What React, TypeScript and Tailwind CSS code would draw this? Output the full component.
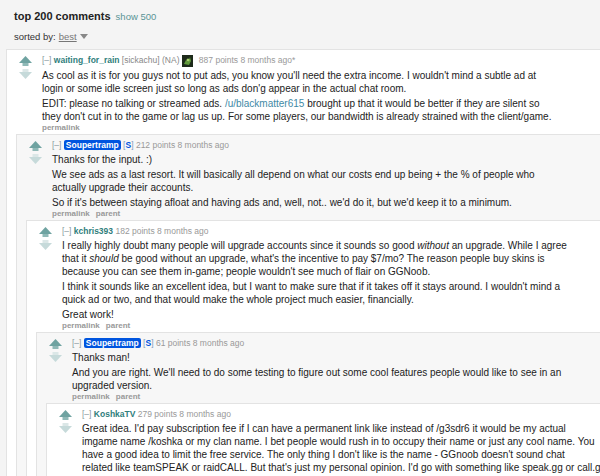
import React from 'react';

type Line = React.ReactNode;

interface CommentData {
  author: string;
  submitter?: boolean;
  flair?: boolean;
  points: number;
  edited?: boolean;
  parent?: boolean;
  paras: Line[][];
  child?: CommentData;
}

const thread: CommentData = {
  author: 'waiting_for_rain',
  flair: true,
  points: 887,
  edited: true,
  paras: [
    [
      "As cool as it is for you guys not to put ads, you know you'll need the extra income. I wouldn't mind a subtle ad at",
      "login or some idle screen just so long as ads don'g appear in the actual chat room.",
    ],
    [
      <>
        EDIT: please no talking or streamed ads.{' '}
        <a className="text-[#3f8aa6]">/u/blackmatter615</a> brought up that it would be better if they are silent so
      </>,
      "they don't cut in to the game or lag us up. For some players, our bandwidth is already strained with the client/game.",
    ],
  ],
  child: {
    author: 'Soupertramp',
    submitter: true,
    points: 212,
    parent: true,
    paras: [
      ['Thanks for the input. :)'],
      [
        'We see ads as a last resort. It will basically all depend on what our costs end up being + the % of people who',
        'actually upgrade their accounts.',
      ],
      ["So if it's between staying afloat and having ads and, well, not.. we'd do it, but we'd keep it to a minimum."],
    ],
    child: {
      author: 'kchris393',
      points: 182,
      parent: true,
      paras: [
        [
          <>
            I really highly doubt many people will upgrade accounts since it sounds so good <em>without</em> an upgrade. While I agree
          </>,
          <>
            that it <em>should</em> be good without an upgrade, what's the incentive to pay $7/mo? The reason people buy skins is
          </>,
          "because you can see them in-game; people wouldn't see much of flair on GGNoob.",
        ],
        [
          "I think it sounds like an excellent idea, but I want to make sure that if it takes off it stays around. I wouldn't mind a",
          'quick ad or two, and that would make the whole project much easier, financially.',
        ],
        ['Great work!'],
      ],
      child: {
        author: 'Soupertramp',
        submitter: true,
        points: 61,
        parent: true,
        paras: [
          ['Thanks man!'],
          [
            "And you are right. We'll need to do some testing to figure out some cool features people would like to see in an",
            'upgraded version.',
          ],
        ],
        child: {
          author: 'KoshkaTV',
          points: 279,
          parent: true,
          paras: [
            [
              "Great idea. I'd pay subscription fee if I can have a permanent link like instead of /g3sdr6 it would be my actual",
              'imgame name /koshka or my clan name. I bet people would rush in to occupy their name or just any cool name. You',
              "have a good idea to limit the free service. The only thing I don't like is the name - GGnoob doesn't sound chat",
              "related like teamSPEAK or raidCALL. But that's just my personal opinion. I'd go with something like speak.gg or call.gg",
              'if you like the gg part.',
            ],
          ],
        },
      },
    },
  },
};

const UpArrow = () => (
  <svg width="13" height="11" viewBox="0 0 13 11">
    <path d="M6.5 0 L13 7 L0 7 Z" fill="#6fa3a1" />
    <rect x="3.5" y="7" width="6" height="3" fill="#8fb9b7" />
  </svg>
);

const DownArrow = () => (
  <svg width="13" height="11" viewBox="0 0 13 11">
    <rect x="3.5" y="0" width="6" height="3" fill="#dbe7e7" />
    <path d="M0 3 L13 3 L6.5 10 Z" fill="#c6dada" />
  </svg>
);

const FlairIcon = () => (
  <svg width="11" height="12" viewBox="0 0 11 12" className="inline-block align-middle mx-[3px]">
    <rect width="11" height="12" fill="#1d2a1a" />
    <path d="M2 9 L4 5 L6 7 L8 2 L9 6 L7 10 Z" fill="#5f9a3a" />
    <circle cx="6" cy="5" r="1.5" fill="#a6d26a" />
  </svg>
);

const Comment = ({ data, level }: { data: CommentData; level: number }) => {
  const bg = level % 2 === 0 ? 'bg-white' : 'bg-[#f7f7f7]';
  return (
    <div className={`${bg} border-t border-l border-[#e3e3e3] ${level > 0 ? 'ml-[9px] mt-[2px]' : ''}`}>
      <div className="flex pt-[4px]">
        {/* vote arrows */}
        <div className="w-[35px] shrink-0 flex flex-col items-center pl-[1px] pt-[2px] gap-[2px]">
          <UpArrow />
          <DownArrow />
        </div>
        <div className="flex-1">
          <div className="text-[8.5px] leading-[12px] text-[#888] whitespace-nowrap">
            <span className="text-[#8a9aa0]">[–]</span>{' '}
            {data.submitter ? (
              <>
                <span className="bg-[#0055df] text-white font-bold rounded-[2px] px-[2px]">{data.author}</span>{' '}
                <span className="text-[#7a9cc0]">
                  [<span className="text-[#0055df] font-bold">S</span>]
                </span>
              </>
            ) : (
              <span className="text-[#2f7e7c] font-bold">{data.author}</span>
            )}
            {data.flair && (
              <>
                {' '}
                <span>[sickachu] (NA)</span>
                <FlairIcon />
              </>
            )}{' '}
            <span className="text-[#999]">
              {data.points} points 8 months ago{data.edited ? '*' : ''}
            </span>
          </div>
          <div className="mt-[2px] flex flex-col gap-[2px] text-[10px] leading-[13px] text-[#222]">
            {data.paras.map((p, i) => (
              <div key={i}>
                {p.map((l, j) => (
                  <div key={j} className="whitespace-nowrap">
                    {l}
                  </div>
                ))}
              </div>
            ))}
          </div>
          <div className="flex gap-[6px] text-[8px] leading-[9px] font-bold text-[#999]">
            <span>permalink</span>
            {data.parent && <span>parent</span>}
          </div>
        </div>
      </div>
      {data.child && <Comment data={data.child} level={level + 1} />}
    </div>
  );
};

export default function App() {
  return (
    <div
      className="w-[600px] h-[476px] overflow-hidden bg-[#f4f4f4]"
      style={{ fontFamily: '"Liberation Sans", Arial, sans-serif' }}
    >
      <div className="pl-[14px] pt-[8px] pb-[5px]">
        <div className="flex items-baseline gap-[5px]">
          <span className="text-[11px] font-bold text-[#222]">top 200 comments</span>
          <span className="text-[9.5px] text-[#5a9596]">show 500</span>
        </div>
        <div className="mt-[5px] text-[9.5px] text-[#333] flex items-center gap-[3px]">
          sorted by:
          <span className="text-[#777] underline">best</span>
          <svg width="8" height="5" viewBox="0 0 8 5">
            <path d="M0 0 L8 0 L4 5 Z" fill="#888" />
          </svg>
        </div>
      </div>
      <div className="pl-[6px] w-[720px]">
        <Comment data={thread} level={0} />
      </div>
    </div>
  );
}
